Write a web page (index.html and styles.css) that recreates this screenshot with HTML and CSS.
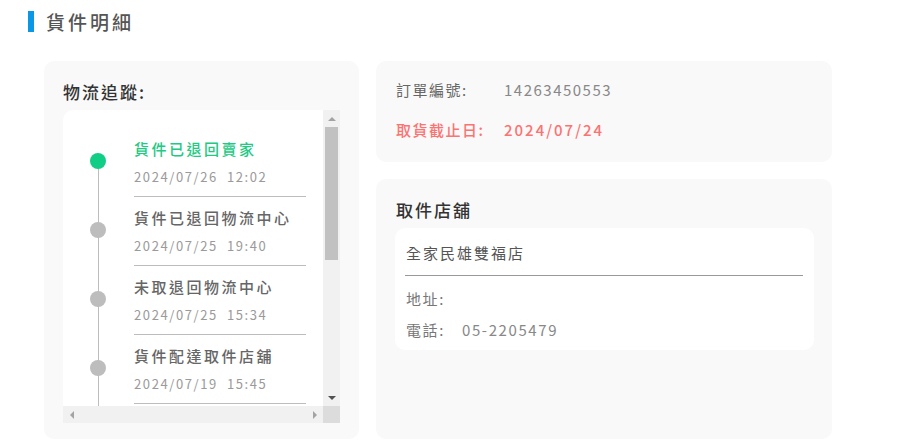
FILE: index.html
```html
<!DOCTYPE html>
<html lang="zh-Hant">
<head>
    <meta charset="UTF-8">
    <meta name="viewport" content="width=device-width, initial-scale=1.0">
    <title>貨件明細</title>
    <link rel="stylesheet" href="styles.css">
</head>
<body>
    <div class="page">
        <h2 class="section-title">貨件明細</h2>

        <div class="detail-layout">
            <div class="card track-card">
                <h3 class="card-title">物流追蹤:</h3>
                <div class="track-box">
                    <div class="track-view">
                        <ul class="timeline">
                            <li class="step step-current">
                                <div class="step-mark"><span class="dot"></span></div>
                                <div class="step-body">
                                    <div class="step-name">貨件已退回賣家</div>
                                    <div class="step-time">2024/07/26&nbsp;&nbsp;12:02</div>
                                </div>
                            </li>
                            <li class="step">
                                <div class="step-mark"><span class="dot"></span></div>
                                <div class="step-body">
                                    <div class="step-name">貨件已退回物流中心</div>
                                    <div class="step-time">2024/07/25&nbsp;&nbsp;19:40</div>
                                </div>
                            </li>
                            <li class="step">
                                <div class="step-mark"><span class="dot"></span></div>
                                <div class="step-body">
                                    <div class="step-name">未取退回物流中心</div>
                                    <div class="step-time">2024/07/25&nbsp;&nbsp;15:34</div>
                                </div>
                            </li>
                            <li class="step">
                                <div class="step-mark"><span class="dot"></span></div>
                                <div class="step-body">
                                    <div class="step-name">貨件配達取件店舖</div>
                                    <div class="step-time">2024/07/19&nbsp;&nbsp;15:45</div>
                                </div>
                            </li>
                            <li class="step">
                                <div class="step-mark"><span class="dot"></span></div>
                                <div class="step-body">
                                    <div class="step-name">貨件已到達物流中心</div>
                                    <div class="step-time">2024/07/18&nbsp;&nbsp;22:10</div>
                                </div>
                            </li>
                            <li class="step">
                                <div class="step-mark"><span class="dot"></span></div>
                                <div class="step-body">
                                    <div class="step-name">貨件已寄出</div>
                                    <div class="step-time">2024/07/18&nbsp;&nbsp;14:26</div>
                                </div>
                            </li>
                            <li class="step">
                                <div class="step-mark"><span class="dot"></span></div>
                                <div class="step-body">
                                    <div class="step-name">賣家已完成寄件</div>
                                    <div class="step-time">2024/07/17&nbsp;&nbsp;18:03</div>
                                </div>
                            </li>
                            <li class="step">
                                <div class="step-mark"><span class="dot"></span></div>
                                <div class="step-body">
                                    <div class="step-name">訂單成立</div>
                                    <div class="step-time">2024/07/17&nbsp;&nbsp;10:51</div>
                                </div>
                            </li>
                        </ul>
                    </div>

                    <!-- 捲軸 -->
                    <div class="vbar">
                        <span class="bar-btn"><i class="arrow arrow-up"></i></span>
                        <span class="vbar-track"><span class="vbar-thumb"></span></span>
                        <span class="bar-btn"><i class="arrow arrow-down"></i></span>
                    </div>
                    <div class="hbar">
                        <span class="bar-btn"><i class="arrow arrow-left"></i></span>
                        <span class="bar-btn"><i class="arrow arrow-right"></i></span>
                    </div>
                    <div class="bar-corner"></div>
                </div>
            </div>

            <div class="side-column">
                <div class="card order-card">
                    <div class="info-row">
                        <span class="info-label">訂單編號:</span>
                        <span class="info-value">14263450553</span>
                    </div>
                    <div class="info-row info-deadline">
                        <span class="info-label">取貨截止日:</span>
                        <span class="info-value">2024/07/24</span>
                    </div>
                </div>

                <div class="card store-card">
                    <h3 class="card-title">取件店舖</h3>
                    <div class="store-box">
                        <div class="store-name">全家民雄雙福店</div>
                        <div class="store-row">
                            <span class="store-label">地址:</span>
                            <span class="store-value"></span>
                        </div>
                        <div class="store-row">
                            <span class="store-label">電話:</span>
                            <span class="store-value">05-2205479</span>
                        </div>
                    </div>
                </div>
            </div>
        </div>
    </div>
</body>
</html>
```

FILE: styles.css
```css
* {
    margin: 0;
    padding: 0;
    box-sizing: border-box;
}

body {
    font-family: "Noto Sans CJK TC", "Noto Sans", sans-serif;
    background: #fff;
    color: #333;
}

.page {
    padding: 11px 28px 0;
}

.section-title {
    border-left: 6px solid #0a98e6;
    padding-left: 12px;
    font-size: 19px;
    line-height: 21px;
    font-weight: 500;
    letter-spacing: 3px;
    color: #555;
}

.detail-layout {
    display: flex;
    gap: 17px;
    margin-top: 29px;
    margin-left: 16px;
}

.card {
    background: #f9f9f9;
    border-radius: 10px;
}

.card-title {
    font-size: 17px;
    line-height: 24px;
    font-weight: 500;
    letter-spacing: 2px;
    color: #333;
}

/* 物流追蹤 */
.track-card {
    width: 315px;
    height: 378px;
    padding: 19px 19px 16px;
}

.track-box {
    margin-top: 6px;
    display: grid;
    grid-template-columns: 260px 17px;
    grid-template-rows: 296px 17px;
    background: #fff;
    border-top-left-radius: 10px;
}

.track-view {
    overflow-y: auto;
    scrollbar-width: none;
}

.timeline {
    list-style: none;
    padding: 18px 0 15px;
}

.step {
    display: grid;
    grid-template-columns: 71px 172px;
}

.step-mark {
    position: relative;
    background: linear-gradient(#bdbdbd, #bdbdbd) no-repeat 35px 0 / 1px 100%;
}

.step-current .step-mark {
    background-position: 35px 33px;
}

.dot {
    position: absolute;
    left: 27px;
    top: 25px;
    width: 16px;
    height: 16px;
    border-radius: 50%;
    background: #bdbdbd;
}

.step-current .dot {
    background: #12cd86;
}

.step-body {
    padding: 10px 0 9px;
    border-bottom: 1px solid #bdbdbd;
}

.step-name {
    font-size: 15px;
    line-height: 22px;
    font-weight: 500;
    letter-spacing: 2.5px;
    color: #666;
}

.step-current .step-name {
    color: #22c983;
}

.step-time {
    margin-top: 7px;
    font-size: 13px;
    line-height: 20px;
    letter-spacing: 1.6px;
    color: #9a9a9a;
}

/* 捲軸外觀 */
.vbar,
.hbar {
    display: flex;
    justify-content: space-between;
    background: #f1f1f1;
}

.vbar {
    flex-direction: column;
}

.bar-btn {
    width: 17px;
    height: 17px;
    flex: none;
    display: flex;
    align-items: center;
    justify-content: center;
}

.vbar-track {
    flex: 1;
    padding: 0 2px;
}

.vbar-thumb {
    display: block;
    height: 133px;
    background: #c1c1c1;
}

.bar-corner {
    background: #dcdcdc;
}

.arrow {
    width: 0;
    height: 0;
    border: 4px solid transparent;
}

.arrow-up {
    border-top-width: 0;
    border-bottom-color: #a3a3a3;
}

.arrow-down {
    border-bottom-width: 0;
    border-top-color: #505050;
}

.arrow-left {
    border-left-width: 0;
    border-right-color: #a3a3a3;
}

.arrow-right {
    border-right-width: 0;
    border-left-color: #a3a3a3;
}

/* 右側資訊 */
.side-column {
    display: flex;
    flex-direction: column;
    gap: 17px;
    width: 456px;
}

.order-card {
    height: 101px;
    padding: 17px 20px;
    display: flex;
    flex-direction: column;
    gap: 16px;
}

.info-row {
    display: flex;
    font-size: 15px;
    line-height: 24px;
    letter-spacing: 1.5px;
}

.info-label {
    width: 108px;
    color: #666;
}

.info-value {
    color: #888;
}

.info-deadline .info-label,
.info-deadline .info-value {
    color: #fb7373;
    font-weight: 500;
}

.info-deadline .info-value {
    letter-spacing: 2px;
}

.store-card {
    height: 260px;
    padding: 19px 18px 0 19px;
}

.store-card .card-title {
    margin-left: 1px;
}

.store-box {
    margin-top: 6px;
    height: 122px;
    background: #fff;
    border-radius: 10px;
    padding: 13px 11px 0 10px;
}

.store-name {
    font-size: 15px;
    line-height: 24px;
    letter-spacing: 2px;
    color: #555;
    padding: 0 0 10px 1px;
    border-bottom: 1px solid #999;
    margin-bottom: 11px;
}

.store-row {
    display: flex;
    font-size: 15px;
    line-height: 24px;
    letter-spacing: 1.6px;
    margin-bottom: 7px;
    padding-left: 1px;
}

.store-label {
    width: 56px;
    color: #777;
}

.store-value {
    color: #888;
}
```
